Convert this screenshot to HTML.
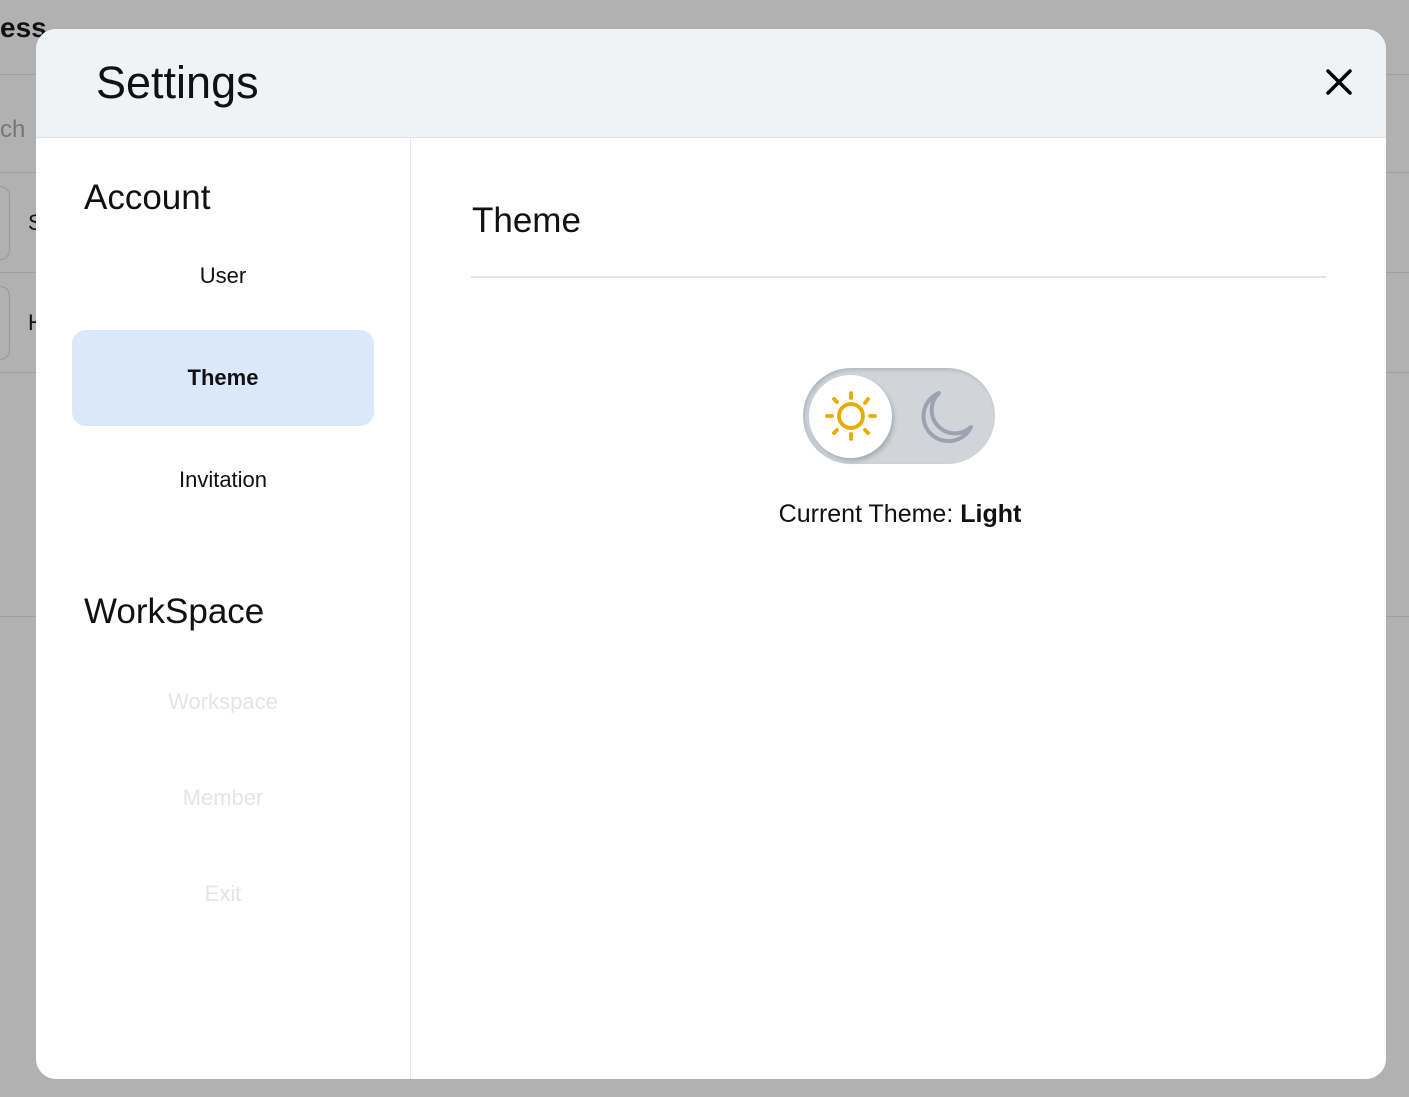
<!DOCTYPE html>
<html><head><meta charset="utf-8"><style>
*{margin:0;padding:0;box-sizing:border-box}
body{width:1409px;height:1097px;background:#b1b1b1;font-family:"Liberation Sans",sans-serif;position:relative;overflow:hidden;color:#111}
.bgl{position:absolute;left:0;right:0;height:1px;background:#a0a0a0}
.modal{position:absolute;left:36px;top:29px;width:1350px;height:1050px;background:#fff;border-radius:20px;overflow:hidden}
.hdr{position:absolute;left:0;top:0;right:0;height:109px;background:#eff3f6;border-bottom:1px solid #dde2e6}
.hdr h1{position:absolute;left:60px;top:28px;font-size:45px;font-weight:400;color:#111}
.side{position:absolute;left:0;top:109px;width:375px;bottom:0;border-right:1px solid #e5e7ea}
.sec{position:absolute;left:48px;font-size:35px;font-weight:400}
.item{position:absolute;left:36px;width:302px;text-align:center;font-size:22px}
.sel{background:#dbe8fc;border-radius:14px;height:96px;line-height:96px;font-weight:700}
.dim{color:#e3e5e8}
</style></head><body>
<div style="position:absolute;left:0;top:12px;font-size:28px;font-weight:700;color:#111">ess</div>
<div class="bgl" style="top:74px"></div>
<div style="position:absolute;left:0;top:116px;font-size:24px;color:#777">ch</div>
<div class="bgl" style="top:172px"></div>
<div style="position:absolute;left:-20px;top:186px;width:30px;height:74px;border:1px solid #999;border-radius:10px"></div>
<div style="position:absolute;left:28px;top:210px;font-size:22px">S</div>
<div class="bgl" style="top:272px"></div>
<div style="position:absolute;left:-20px;top:286px;width:30px;height:74px;border:1px solid #999;border-radius:10px"></div>
<div style="position:absolute;left:28px;top:310px;font-size:22px">H</div>
<div class="bgl" style="top:372px"></div>
<div class="bgl" style="top:616px"></div>
<div class="modal">
<div class="hdr"><h1>Settings</h1>
<svg style="position:absolute;left:1290px;top:40px" width="26" height="26" viewBox="0 0 26 26"><path d="M2 2L24 24M24 2L2 24" stroke="#000" stroke-width="3.5" stroke-linecap="round"/></svg></div>
<div class="side">
<div class="sec" style="top:40px">Account</div>
<div class="item" style="top:125px">User</div>
<div class="item sel" style="top:192px">Theme</div>
<div class="item" style="top:329px">Invitation</div>
<div class="sec" style="top:454px">WorkSpace</div>
<div class="item dim" style="top:551px">Workspace</div>
<div class="item dim" style="top:647px">Member</div>
<div class="item dim" style="top:743px">Exit</div>
</div>
<div style="position:absolute;left:436px;top:172px;font-size:35px">Theme</div>
<div style="position:absolute;left:435px;top:247px;width:855px;height:2px;background:#e3e5e8"></div>
<div style="position:absolute;left:767px;top:339px;width:192px;height:96px;border-radius:48px;background:#d1d5db;box-shadow:inset 2px 2px 4px rgba(0,0,0,0.15)"></div>
<div style="position:absolute;left:773px;top:346px;width:83px;height:83px;border-radius:50%;background:#fff;box-shadow:2px 3px 5px rgba(0,0,0,0.2)"></div>
<svg style="position:absolute;left:787px;top:360px" width="56" height="56" viewBox="0 0 56 56" fill="none" stroke="#e6ac00" stroke-width="3.8" stroke-linecap="round"><circle cx="28" cy="27" r="12"/><path d="M28 4v5M28 45v5M4 27h5M47 27h5M11 10l3 3M42 41l3 3M11 44l3-3M42 14l3-4"/></svg>
<svg style="position:absolute;left:879px;top:358px" width="60" height="60" viewBox="0 0 60 60" fill="none" stroke="#9ca3af" stroke-width="4" stroke-linecap="round" stroke-linejoin="round"><path d="M24 6A25 25 0 1 0 56 40A23 23 0 0 1 24 6Z"/></svg>
<div style="position:absolute;left:704px;top:471px;width:320px;text-align:center;font-size:25px">Current Theme: <b>Light</b></div>
</div>
</body></html>
